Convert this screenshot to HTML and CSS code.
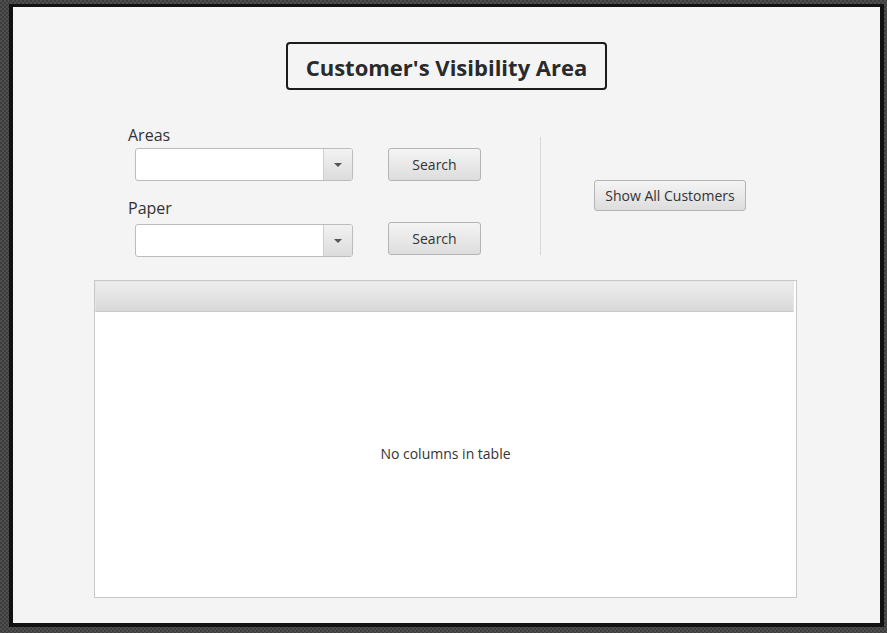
FILE: index.html
```html
<!DOCTYPE html>
<html>
<head>
<meta charset="utf-8">
<link rel="stylesheet" href="styles.css">
</head>
<body>
<div class="window">
  <div class="inner">
    <div class="title-row">
      <div class="title">Customer's Visibility Area</div>
    </div>
    <div class="controls">
      <div class="left">
        <div class="label">Areas</div>
        <div class="field-row row1">
          <div class="combo"><div class="combo-text"></div><div class="combo-arrow"><span class="tri"></span></div></div>
          <button class="btn search">Search</button>
        </div>
        <div class="label label2">Paper</div>
        <div class="field-row row2">
          <div class="combo"><div class="combo-text"></div><div class="combo-arrow"><span class="tri"></span></div></div>
          <button class="btn search search2">Search</button>
        </div>
      </div>
      <div class="sep"></div>
      <div class="right">
        <button class="btn showall">Show All Customers</button>
      </div>
    </div>
    <div class="table">
      <div class="thead"></div>
      <div class="tbody">No columns in table</div>
    </div>
  </div>
</div>
</body>
</html>
```
FILE: styles.css
```css
html, body {
  margin: 0;
  padding: 0;
}
body {
  width: 887px;
  height: 633px;
  background-color: #454545;
  background-image: repeating-conic-gradient(#3c3c3c 0 25%, #4f4f4f 0 50%);
  background-size: 4px 4px;
  padding: 4px 3px 6px 9px;
  box-sizing: border-box;
  font-family: "Open Sans", "Noto Sans", sans-serif;
  color: #333;
}
.window {
  width: 875px;
  height: 623px;
  box-sizing: border-box;
  border-style: solid;
  border-color: #111;
  border-width: 3px 4px 4px 4px;
  background: #f4f4f4;
}
.inner {
  height: 100%;
  display: flex;
  flex-direction: column;
}
.title-row {
  display: flex;
  justify-content: center;
  padding-top: 35px;
}
.title {
  width: 321px;
  height: 48px;
  box-sizing: border-box;
  border: 2px solid #1c1c1c;
  border-radius: 4px;
  display: flex;
  align-items: center;
  justify-content: center;
  font-weight: bold;
  font-size: 22px;
  color: #2a2a2a;
  padding-top: 1px;
}
.controls {
  display: flex;
  margin-top: 35px;
  padding-left: 115px;
  height: 134px;
}
.left {
  display: flex;
  flex-direction: column;
  width: 353px;
}
.label {
  font-size: 16px;
  line-height: 21px;
  height: 21px;
  color: #333;
}
.label2 {
  margin-top: 17px;
}
.field-row {
  display: flex;
  align-items: flex-start;
  padding-left: 7px;
}
.row1 {
  margin-top: 2px;
}
.row2 {
  margin-top: 5px;
}
.combo {
  width: 218px;
  height: 33px;
  box-sizing: border-box;
  border: 1px solid #bcbcbc;
  border-radius: 3px;
  background: #fff;
  display: flex;
  overflow: hidden;
}
.combo-text {
  flex: 1;
}
.combo-arrow {
  width: 28px;
  border-left: 1px solid #cfcfcf;
  background: linear-gradient(#f2f2f2, #dcdcdc);
  display: flex;
  align-items: center;
  justify-content: center;
}
.tri {
  width: 0;
  height: 0;
  border-left: 4px solid transparent;
  border-right: 4px solid transparent;
  border-top: 4px solid #555;
}
.btn {
  font-family: inherit;
  font-size: 14px;
  color: #333;
  background: linear-gradient(#f4f4f4, #dddddd);
  border: 1px solid #b4b4b4;
  border-radius: 3px;
  padding: 0;
  margin: 0;
}
.search {
  width: 93px;
  height: 33px;
  margin-left: 35px;
}
.search2 {
  margin-top: -2px;
}
.sep {
  width: 1px;
  background: #d8d8d8;
  margin-left: 59px;
  margin-top: 12px;
  height: 118px;
}
.right {
  width: 258px;
  display: flex;
  justify-content: center;
  padding-top: 55px;
}
.showall {
  width: 152px;
  height: 31px;
}
.table {
  margin-top: 21px;
  margin-left: 81px;
  width: 703px;
  height: 318px;
  box-sizing: border-box;
  border: 1px solid #c9c9c9;
  background: #fff;
  display: flex;
  flex-direction: column;
}
.thead {
  height: 31px;
  box-sizing: border-box;
  margin-right: 2px;
  border: 1px solid #e6e6e6;
  border-bottom: 1px solid #c8c8c8;
  background: linear-gradient(#eeeeee, #d8d8d8);
}
.tbody {
  flex: 1;
  display: flex;
  align-items: center;
  justify-content: center;
  font-size: 14px;
  color: #333;
  padding-bottom: 3px;
}
```
